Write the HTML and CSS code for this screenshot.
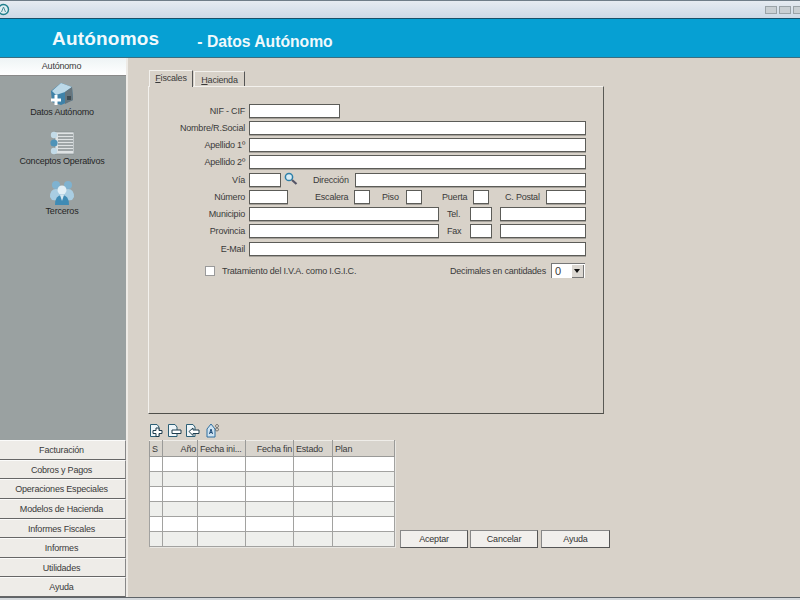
FILE: index.html
```html
<!DOCTYPE html>
<html lang="es">
<head>
    <meta charset="UTF-8">
    <title>Autónomos</title>
    <link rel="stylesheet" href="styles.css">
</head>
<body>
    <div class="titlebar">
        <svg class="app-icon" width="10" height="13" viewBox="0 0 10 13">
            <circle cx="3.500" cy="6.500" r="5" fill="#dfeef2" stroke="#1f7f8c" stroke-width="1.400"/>
            <path d="M1.500 9 L3.500 4 L5.500 9" fill="none" stroke="#4a8f9a"/>
        </svg>
        <div class="win-buttons">
            <span class="win-btn"></span>
            <span class="win-btn"></span>
            <span class="win-btn"></span>
        </div>
    </div>
    <div class="banner">
        <span class="banner-title">Autónomos</span>
        <span class="banner-sub">- Datos Autónomo</span>
    </div>
    <div class="body-row">
        <div class="sidebar">
            <div class="side-head">Autónomo</div>
            <div class="side-items">
                <div class="side-item">
                    <svg width="24" height="24" viewBox="0 0 24 24">
                        <path d="M1 9 L11 1 L22 5 L23 18 L11 23 L2 20 Z" fill="#3f82a8"/>
                        <path d="M2 9 L11 1 L22 5 L15 10 L6 13 Z" fill="#bcd9e8"/>
                        <path d="M15 10 L22 5 L23 18 L15 22 Z" fill="#66757d"/>
                        <path d="M17 14 h4 v4 h-4 Z" fill="#3f4c52"/>
                        <path d="M4.500 13 h3 v3.500 h3.500 v3 h-3.500 v3.500 h-3 v-3.500 h-3.500 v-3 h3.500 Z" fill="#fff"/>
                    </svg>
                    <span>Datos Autónomo</span>
                </div>
                <div class="side-item">
                    <svg width="24" height="24" viewBox="0 0 24 24">
                        <rect x="5" y="1" width="19" height="22" fill="#dfe3e4" stroke="#7d8789" stroke-width="0.600"/>
                        <path d="M8 4 H23 M8 7 H23 M8 10 H23 M8 13 H23 M8 16 H23 M8 19 H23" stroke="#5f696b"/>
                        <circle cx="4" cy="4" r="3.200" fill="#c3dbe8"/>
                        <circle cx="4" cy="12" r="3.600" fill="#4f93b8"/>
                        <circle cx="4" cy="20" r="3.200" fill="#c3dbe8"/>
                    </svg>
                    <span>Conceptos Operativos</span>
                </div>
                <div class="side-item">
                    <svg width="26" height="25" viewBox="0 0 26 25">
                        <circle cx="7" cy="5" r="4" fill="#7fb2d0"/>
                        <circle cx="19" cy="5" r="4" fill="#7fb2d0"/>
                        <path d="M1 17 Q1 9 7 9 Q12 9 13 15 L11 21 L3 20 Z" fill="#a9cde2"/>
                        <path d="M25 17 Q25 9 19 9 Q14 9 13 15 L15 21 L23 20 Z" fill="#a9cde2"/>
                        <circle cx="13" cy="10" r="4.500" fill="#e2eff6"/>
                        <path d="M6 25 Q6 15 13 15 Q20 15 20 25 Z" fill="#3f8bb5"/>
                        <path d="M11 15 h4 l-2 6 Z" fill="#d5e7f1"/>
                    </svg>
                    <span>Terceros</span>
                </div>
            </div>
            <div class="side-btn">Facturación</div>
            <div class="side-btn">Cobros y Pagos</div>
            <div class="side-btn">Operaciones Especiales</div>
            <div class="side-btn">Modelos de Hacienda</div>
            <div class="side-btn">Informes Fiscales</div>
            <div class="side-btn">Informes</div>
            <div class="side-btn">Utilidades</div>
            <div class="side-btn">Ayuda</div>
        </div>
        <div class="main">
            <div class="tabs">
                <div class="tab active"><u>F</u>iscales</div>
                <div class="tab"><u>H</u>acienda</div>
            </div>
            <div class="panel">
                <div class="row">
                    <label class="lbl">NIF - CIF</label>
                    <span class="field w-nif"></span>
                </div>
                <div class="row">
                    <label class="lbl">Nombre/R.Social</label>
                    <span class="field grow"></span>
                </div>
                <div class="row">
                    <label class="lbl">Apellido 1º</label>
                    <span class="field grow"></span>
                </div>
                <div class="row">
                    <label class="lbl">Apellido 2º</label>
                    <span class="field grow"></span>
                </div>
                <div class="row">
                    <label class="lbl">Vía</label>
                    <span class="field w-via"></span>
                    <svg class="lens" width="14" height="13" viewBox="0 0 14 13">
                        <circle cx="5" cy="5" r="3.600" fill="#d8ecf5" stroke="#2c7fa8" stroke-width="1.500"/>
                        <path d="M8 8 L12.500 12" stroke="#556" stroke-width="2.200"/>
                    </svg>
                    <label class="lbl-dir">Dirección</label>
                    <span class="field grow"></span>
                </div>
                <div class="row">
                    <label class="lbl">Número</label>
                    <span class="field w-num"></span>
                    <label class="lbl-esc">Escalera</label>
                    <span class="field w-esc"></span>
                    <label class="lbl-piso">Piso</label>
                    <span class="field w-esc"></span>
                    <label class="lbl-puerta">Puerta</label>
                    <span class="field w-esc"></span>
                    <label class="lbl-postal">C. Postal</label>
                    <span class="field grow"></span>
                </div>
                <div class="row">
                    <label class="lbl">Municipio</label>
                    <span class="field w-mun"></span>
                    <label class="lbl-tel">Tel.</label>
                    <span class="field w-pre"></span>
                    <span class="field grow gap-l"></span>
                </div>
                <div class="row">
                    <label class="lbl">Provincia</label>
                    <span class="field w-mun"></span>
                    <label class="lbl-tel">Fax</label>
                    <span class="field w-pre"></span>
                    <span class="field grow gap-l"></span>
                </div>
                <div class="row">
                    <label class="lbl">E-Mail</label>
                    <span class="field grow"></span>
                </div>
                <div class="options">
                    <span class="check"></span>
                    <span class="check-text">Tratamiento del I.V.A. como I.G.I.C.</span>
                    <span class="dec-text">Decimales en cantidades</span>
                    <span class="combo"><span class="combo-val">0</span><span class="combo-arrow"></span></span>
                </div>
            </div>
            <div class="toolbar">
                <svg width="15" height="15" viewBox="0 0 15 15"><path d="M1.500 1.500 H8 L10 4 V13.500 H1.500 Z" fill="#eef5f8" stroke="#2d5f75"/><path d="M7 5 h3 v2.500 h3 v3 h-3 v3 h-3 v-3 h-3 v-3 h3 Z" fill="#fff" stroke="#1f3d4d"/></svg>
                <svg width="15" height="15" viewBox="0 0 15 15"><path d="M1.500 1.500 H8 L10 4 V13.500 H1.500 Z" fill="#eef5f8" stroke="#2d5f75"/><path d="M5 7 h9 v3.500 h-9 Z" fill="#fff" stroke="#1f3d4d"/></svg>
                <svg width="15" height="15" viewBox="0 0 15 15"><path d="M1.500 1.500 H8 L10 4 V13.500 H1.500 Z" fill="#eef5f8" stroke="#2d5f75"/><path d="M4 8.500 L8 5 V7 H14 V10.500 H8 V12.500 Z" fill="#fff" stroke="#1f3d4d"/></svg>
                <svg class="tool-last" width="15" height="15" viewBox="0 0 15 15"><path d="M2 14 V6 L6 1 L10 6 V14 Z" fill="#cfe3f1" stroke="#2f6f9f"/><path d="M4.500 11 L6 6 L7.500 11 M5 9.500 H7" fill="none" stroke="#1f4d7a"/><path d="M12 1.500 a1.500 1.500 0 1 0 .01 0 M12 5 a1.500 1.500 0 1 0 .01 0" fill="none" stroke="#555" stroke-width="0.800"/></svg>
            </div>
            <div class="bottom">
                <table class="grid">
                    <colgroup>
                        <col class="c-s"><col class="c-ano"><col class="c-ini"><col class="c-fin"><col class="c-est"><col class="c-plan">
                    </colgroup>
                    <thead>
                        <tr><th>S</th><th class="r">Año</th><th>Fecha ini...</th><th class="r">Fecha fin</th><th>Estado</th><th>Plan</th></tr>
                    </thead>
                    <tbody>
                        <tr><td></td><td></td><td></td><td></td><td></td><td></td></tr>
                        <tr><td></td><td></td><td></td><td></td><td></td><td></td></tr>
                        <tr><td></td><td></td><td></td><td></td><td></td><td></td></tr>
                        <tr><td></td><td></td><td></td><td></td><td></td><td></td></tr>
                        <tr><td></td><td></td><td></td><td></td><td></td><td></td></tr>
                        <tr><td></td><td></td><td></td><td></td><td></td><td></td></tr>
                    </tbody>
                </table>
                <div class="actions">
                    <button>Aceptar</button>
                    <button>Cancelar</button>
                    <button>Ayuda</button>
                </div>
            </div>
        </div>
    </div>
    <div class="statusline"></div>
</body>
</html>
```

FILE: styles.css
```css
html, body {
    margin: 0;
    height: 600px;
    overflow: hidden;
}
body {
    display: flex;
    flex-direction: column;
    width: 800px;
    background-color: #d8d2c9;
    font-family: "Liberation Sans", Arial, sans-serif;
    font-size: 9px;
    letter-spacing: -0.2px;
    color: #3a3a3a;
}
label, span {
    white-space: nowrap;
}

/* top window bar */
.titlebar {
    display: flex;
    align-items: center;
    justify-content: space-between;
    flex: none;
    height: 19px;
    box-sizing: border-box;
    border-top: 1px solid #6f7d88;
    border-bottom: 1px solid #17516b;
    background: linear-gradient(#e6ebf1, #cdd9e6);
}
.app-icon {
    display: block;
}
.win-buttons {
    display: flex;
    gap: 2px;
    margin-right: -5px;
}
.win-btn {
    width: 10px;
    height: 6px;
    background-color: #c9cfd3;
    border: 1px solid #9aa3a8;
}
.banner {
    display: flex;
    align-items: flex-start;
    flex: none;
    height: 39px;
    box-sizing: border-box;
    padding: 9px 0 0 52px;
    background-color: #06a0d3;
    border-bottom: 1px solid #3b6e80;
    color: #f0f9fc;
    font-weight: bold;
    letter-spacing: 0;
}
.banner-title {
    font-size: 19px;
    line-height: 22px;
    letter-spacing: 0.2px;
}
.banner-sub {
    margin: 5px 0 0 38px;
    font-size: 15.700px;
    line-height: 18px;
}
.body-row {
    display: flex;
    flex: 1;
    min-height: 0;
}

/* left column */
.sidebar {
    display: flex;
    flex-direction: column;
    width: 126px;
    border-right: 2px solid #eeebe6;
    box-shadow: inset -1px 0 0 #777;
    text-align: center;
}
.side-head {
    flex: none;
    height: 18px;
    line-height: 17px;
    padding-right: 3px;
    background: linear-gradient(#eef4f5, #fff);
    border-bottom: 1px solid #8a8a8a;
    box-sizing: border-box;
}
.side-items {
    flex: 1;
    padding: 5.500px 2px 0 0;
    background-color: #9aa1a1;
    color: #262626;
}
.side-item {
    display: flex;
    flex-direction: column;
    align-items: center;
    height: 49px;
}
.side-item span {
    line-height: 12px;
}
.side-btn {
    flex: none;
    height: 19.600px;
    line-height: 18px;
    padding-right: 2px;
    box-sizing: border-box;
    background-color: #eeece8;
    border-top: 1px solid #fbfbfa;
    border-bottom: 1px solid #666;
    border-right: 1px solid #888;
}

/* form */
.main {
    flex: 1;
    padding: 11px 0 0 20px;
}
.tabs {
    display: flex;
    align-items: flex-end;
    height: 17px;
    margin-left: 1px;
}
.tab {
    height: 15px;
    width: 51px;
    margin-left: 1px;
    line-height: 16px;
    text-align: center;
    box-sizing: border-box;
    border-top: 1px solid #f3f1ed;
    border-left: 1px solid #f3f1ed;
    border-right: 1px solid #555;
}
.tab.active {
    width: 44px;
    height: 17px;
    margin-left: 0;
    margin-bottom: -1px;
    line-height: 15px;
    position: relative;
    z-index: 1;
    background-color: #d8d2c9;
}
.panel {
    width: 456px;
    height: 328px;
    box-sizing: border-box;
    padding: 16px 17px 0 0;
    border-top: 1px solid #f3f1ed;
    border-left: 1px solid #f3f1ed;
    border-right: 1px solid #5a5a55;
    border-bottom: 1px solid #4f4f4a;
}
.row {
    display: flex;
    align-items: center;
    height: 15px;
    margin-bottom: 2.250px;
}
.lbl {
    width: 96px;
    margin-right: 4px;
    text-align: right;
}
.field {
    display: block;
    height: 14px;
    box-sizing: border-box;
    background-color: #fff;
    border: 1px solid #5c5c58;
    box-shadow: 0 1px 0 #a5a19a;
}
.grow {
    flex: 1;
}
.gap-l {
    margin-left: 8px;
}
.w-nif { width: 91px; }
.w-via { width: 32px; }
.w-num { width: 39px; }
.w-esc { width: 16px; }
.w-mun { width: 190px; }
.w-pre { width: 22px; }
.lens {
    margin: 0 0 2px 3px;
}
.lbl-dir {
    margin: 0 6px 0 15px;
    width: 36px;
}
.lbl-esc {
    margin: 0 6px 0 27px;
    width: 33px;
}
.lbl-piso {
    margin: 0 8px 0 12px;
    width: 16px;
}
.lbl-puerta {
    margin: 0 6px 0 20px;
    width: 25px;
}
.lbl-postal {
    margin: 0 8px 0 16px;
    width: 33px;
}
.lbl-tel {
    margin: 0 10px 0 8px;
    width: 13px;
}
.options {
    display: flex;
    align-items: center;
    height: 15px;
    margin-top: 7px;
    padding-left: 56px;
}
.check {
    flex: none;
    width: 10px;
    height: 10px;
    background-color: #fff;
    border: 1px solid #9a9a9a;
    box-sizing: border-box;
}
.check-text {
    margin-left: 7px;
    width: 228px;
}
.dec-text {
    width: 101px;
}
.combo {
    display: flex;
    align-items: center;
    justify-content: space-between;
    width: 34px;
    height: 15px;
    box-sizing: border-box;
    padding: 0 1px 0 3px;
    background-color: #fff;
    border-left: 1px solid #777;
    border-top: 1px solid #777;
    font-size: 11px;
}
.combo-arrow {
    position: relative;
    width: 11px;
    height: 12px;
    background-color: #dcd8d2;
    border-right: 1px solid #777;
    border-bottom: 1px solid #777;
}
.combo-arrow::after {
    content: "";
    position: absolute;
    left: 2px;
    top: 4px;
    border-left: 3.500px solid transparent;
    border-right: 3.500px solid transparent;
    border-top: 4px solid #111;
}

/* bottom grid */
.toolbar {
    display: flex;
    align-items: center;
    gap: 3px;
    height: 15px;
    margin: 9px 0 2px 1px;
}
.tool-last {
    margin-left: 2px;
}
.bottom {
    display: flex;
    align-items: flex-end;
}
.grid {
    width: 245px;
    margin-left: 1px;
    table-layout: fixed;
    border-collapse: collapse;
    background-color: #fff;
    border: 1px solid #9a9a98;
    box-shadow: 1px 1px 0 #e9e7e2;
}
.c-s { width: 13px; }
.c-ano { width: 35px; }
.c-ini { width: 48px; }
.c-fin { width: 48px; }
.c-est { width: 39px; }
.c-plan { width: 62px; }
.grid th {
    height: 15px;
    padding: 0 0 0 2px;
    overflow: hidden;
    white-space: nowrap;
    font-weight: normal;
    text-align: left;
    background-color: #d8d4cd;
    border: 1px solid #9a9a98;
    border-top-color: #efede9;
}
.grid th.r {
    padding: 0 1px 0 0;
    text-align: right;
}
.grid td {
    height: 14px;
    padding: 0;
    border: 1px solid #a2a2a0;
}
.grid tbody tr:nth-child(even) {
    background-color: #eeefec;
}
.actions {
    display: flex;
    gap: 2px;
    margin: 0 0 -1px 5px;
}
.actions button {
    width: 68px;
    height: 18px;
    padding: 0;
    font: inherit;
    letter-spacing: inherit;
    color: #333;
    background-color: #f1efec;
    border: 1px solid #555;
    border-color: #888 #555 #555 #888;
}
.actions button:last-child {
    width: 69px;
    margin-left: 1px;
}
.statusline {
    flex: none;
    height: 3px;
    border-top: 1px solid #5f6468;
    box-sizing: border-box;
    background-color: #d5d9dc;
}
```
